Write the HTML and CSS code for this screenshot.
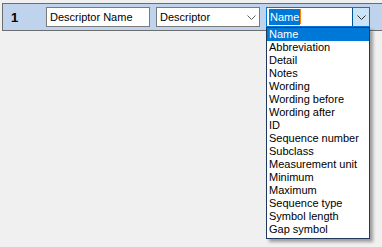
FILE: index.html
```
<!DOCTYPE html>
<html lang="en">
<head>
    <meta charset="UTF-8">
    <title>Descriptor editor</title>
    <link rel="stylesheet" href="styles.css">
</head>
<body>
    <div class="row">
        <div class="row-num">1</div>
        <div class="textbox">Descriptor Name</div>
        <div class="combo">
            <span class="combo-text">Descriptor</span>
            <span class="combo-btn">
                <svg width="9" height="5" viewBox="0 0 9 5"><path d="M0.5 0.5 L4.5 4.5 L8.5 0.5" fill="none" stroke="#606060" stroke-width="1"/></svg>
            </span>
        </div>
        <div class="combo focused">
            <span class="combo-text"><span class="selected">Name</span><span class="caret"></span></span>
            <span class="combo-btn">
                <svg width="9" height="5" viewBox="0 0 9 5"><path d="M0.5 0.5 L4.5 4.5 L8.5 0.5" fill="none" stroke="#303030" stroke-width="1"/></svg>
            </span>
            <ul class="dropdown">
                <li class="active">Name</li>
                <li>Abbreviation</li>
                <li>Detail</li>
                <li>Notes</li>
                <li>Wording</li>
                <li>Wording before</li>
                <li>Wording after</li>
                <li>ID</li>
                <li>Sequence number</li>
                <li>Subclass</li>
                <li>Measurement unit</li>
                <li>Minimum</li>
                <li>Maximum</li>
                <li>Sequence type</li>
                <li>Symbol length</li>
                <li>Gap symbol</li>
            </ul>
        </div>
    </div>
</body>
</html>
```
FILE: styles.css
```
body {
    margin: 0;
    padding-top: 3px;
    font-family: "Liberation Sans", Arial, sans-serif;
    font-size: 11px;
    background-color: #f0f0f0;
    height: 244px;
}
.row {
    display: flex;
    align-items: center;
    margin-left: 2px;
    height: 26px;
    border: 1px solid #6d6d6d;
    border-right: none;
    background-color: #bfd3ec;
}
.row-num {
    width: 43px;
    padding-left: 8px;
    box-sizing: border-box;
    font-weight: bold;
    font-size: 13px;
    color: #000;
}
.textbox {
    width: 104px;
    height: 20px;
    box-sizing: border-box;
    border: 1px solid #7a7a7a;
    background: white;
    padding: 3px 0 0 3px;
    margin-right: 6px;
}
.combo {
    position: relative;
    display: flex;
    width: 104px;
    height: 20px;
    box-sizing: border-box;
    border: 1px solid #7a7a7a;
    background: white;
    margin-right: 6px;
}
.combo-text {
    flex: 1;
    padding: 3px 0 0 3px;
    display: flex;
    align-items: flex-start;
}
.combo-btn {
    width: 16px;
    display: flex;
    align-items: center;
    justify-content: center;
}
.combo.focused {
    border-color: #0078d7;
}
.combo.focused .combo-text {
    padding: 1px 0 0 2px;
}
.combo.focused .combo-btn {
    background-color: #cce4f7;
    border-left: 1px solid #005499;
}
.selected {
    background-color: #0078d7;
    color: white;
    padding: 2px 1px 2px 1px;
}
.caret {
    width: 1px;
    height: 15px;
    background-color: #ff7f00;
}
.dropdown {
    position: absolute;
    top: 19px;
    left: -1px;
    width: 104px;
    margin: 0;
    padding: 0 0 2px 0;
    box-sizing: border-box;
    list-style: none;
    background: white;
    border: 1px solid #1e395b;
    box-shadow: 3px 3px 3px rgba(0,0,0,0.35);
}
.dropdown li {
    height: 13px;
    line-height: 13px;
    padding-left: 2px;
    color: #000;
}
.dropdown li.active {
    background-color: #0078d7;
    color: white;
}
```
